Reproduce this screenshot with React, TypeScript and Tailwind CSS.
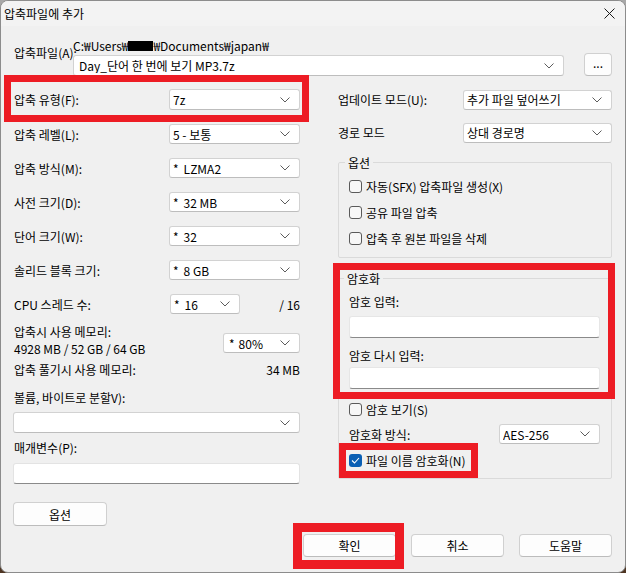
import React from "react";

function Chevron() {
  return (
    <svg width="10" height="6" viewBox="0 0 10 6" className="shrink-0">
      <polyline points="0.5,0.5 5,5 9.5,0.5" fill="none" stroke="#5c5c5c" strokeWidth="1" />
    </svg>
  );
}

function Combo({ children, className }: { children?: React.ReactNode; className: string }) {
  return (
    <div className={"flex items-center bg-white border border-[#d2d2d2] border-b-[#bdbdbd] rounded-[3px] pl-[3px] pr-[9px] " + className}>
      <span className="flex-1 whitespace-nowrap overflow-hidden">{children}</span>
      <Chevron />
    </div>
  );
}

function Star({ children }: { children: React.ReactNode }) {
  return (
    <>
      <span className="mr-[5px]">*</span>
      {children}
    </>
  );
}

function Check({ checked, label }: { checked?: boolean; label: string }) {
  return (
    <div className="flex items-center h-[26px]">
      {checked ? (
        <span className="w-[13px] h-[13px] rounded-[3px] bg-[#0a5fb4] flex items-center justify-center shrink-0">
          <svg width="9" height="7" viewBox="0 0 9 7">
            <polyline points="1,3.5 3.5,6 8,1" fill="none" stroke="#ffffff" strokeWidth="1.1" />
          </svg>
        </span>
      ) : (
        <span className="w-[13px] h-[13px] rounded-[3px] border border-[#5a5a5a] bg-[#f7f7f7] shrink-0" />
      )}
      <span className="ml-[4px] whitespace-nowrap">{label}</span>
    </div>
  );
}

function Row({ label, children, tall }: { label: string; children: React.ReactNode; tall?: boolean }) {
  return (
    <div className={"flex items-center justify-between " + (tall ? "h-[35px]" : "h-[34px]")}>
      <span className="pl-[1px] whitespace-nowrap">{label}</span>
      {children}
    </div>
  );
}

function Btn({ children, className }: { children: React.ReactNode; className: string }) {
  return (
    <button className={"flex items-center justify-center bg-[#fdfdfd] border border-[#d0d0d0] border-b-[#bcbcbc] rounded-[4px] " + className}>
      {children}
    </button>
  );
}

export default function App() {
  return (
    <div className="w-[626px] h-[573px] bg-linear-to-b from-[#a8a8a8] to-[#4e3522] font-['Noto_Sans_CJK_KR',sans-serif] text-[12px] leading-[15px] text-black">
      <div className="relative w-full h-full flex flex-col rounded-[8px] border border-[#8c8c8c] bg-[#f0f0f0] overflow-hidden">
        {/* title bar */}
        <div className="h-[25px] shrink-0 flex items-center justify-between bg-[#f3f3f3] pl-[3px] pr-[10px]">
          <span>압축파일에 추가</span>
          <svg width="11" height="11" viewBox="0 0 11 11">
            <line x1="0.5" y1="0.5" x2="10.5" y2="10.5" stroke="#1a1a1a" strokeWidth="1" />
            <line x1="10.5" y1="0.5" x2="0.5" y2="10.5" stroke="#1a1a1a" strokeWidth="1" />
          </svg>
        </div>

        {/* body */}
        <div className="flex-1 flex flex-col pl-[12px] pr-[13px]">
          {/* header */}
          <div className="flex pt-[12px]">
            <span className="w-[60px] shrink-0 pt-[7px] pl-[1px] whitespace-nowrap">압축파일(A):</span>
            <div className="flex-1 flex flex-col">
              <div className="h-[15px] flex items-center whitespace-nowrap">
                C:₩Users₩<span className="inline-block w-[25px] h-[10px] bg-black" />₩Documents₩japan₩
              </div>
              <div className="flex items-end h-[23px]">
                <Combo className="w-[491px] h-[21px]">
                  <span className="pl-[2px]">Day_단어 한 번에 보기 MP3.7z</span>
                </Combo>
                <Btn className="ml-auto w-[28px] h-[23px] pb-[4px]">...</Btn>
              </div>
            </div>
          </div>

          {/* columns */}
          <div className="flex mt-[6px] gap-[38px]">
            {/* left */}
            <div className="w-[287px] flex flex-col">
              <Row label="압축 유형(F):" tall>
                <Combo className="w-[131px] h-[21px]">7z</Combo>
              </Row>
              <Row label="압축 레벨(L):">
                <Combo className="w-[131px] h-[20px]">5 - 보통</Combo>
              </Row>
              <Row label="압축 방식(M):">
                <Combo className="w-[131px] h-[20px]"><Star>LZMA2</Star></Combo>
              </Row>
              <Row label="사전 크기(D):">
                <Combo className="w-[131px] h-[20px]"><Star>32 MB</Star></Combo>
              </Row>
              <Row label="단어 크기(W):">
                <Combo className="w-[131px] h-[20px]"><Star>32</Star></Combo>
              </Row>
              <Row label="솔리드 블록 크기:">
                <Combo className="w-[131px] h-[20px]"><Star>8 GB</Star></Combo>
              </Row>
              <div className="flex items-center h-[34px]">
                <span className="pl-[1px] w-[157px] whitespace-nowrap">CPU 스레드 수:</span>
                <Combo className="w-[70px] h-[20px]"><Star>16</Star></Combo>
                <span className="ml-auto whitespace-nowrap">/ 16</span>
              </div>
              <div className="flex justify-between mt-[2px] h-[34px]">
                <div className="flex flex-col pl-[1px]">
                  <span className="h-[17px] flex items-center whitespace-nowrap">압축시 사용 메모리:</span>
                  <span className="h-[17px] flex items-center whitespace-nowrap">4928 MB / 52 GB / 64 GB</span>
                </div>
                <Combo className="w-[77px] h-[20px] mt-[10px]">
                  <span className="pl-[2px]"><span className="mr-[4px]">*</span>80%</span>
                </Combo>
              </div>
              <div className="flex justify-between items-center h-[17px] mt-[4px]">
                <span className="pl-[1px] whitespace-nowrap">압축 풀기시 사용 메모리:</span>
                <span>34 MB</span>
              </div>
              <div className="h-[17px] flex items-center mt-[11px] pl-[1px] whitespace-nowrap">볼륨, 바이트로 분할V):</div>
              <Combo className="w-full h-[21px] mt-[6px]">{""}</Combo>
              <div className="h-[17px] flex items-center mt-[6px] pl-[1px]">매개변수(P):</div>
              <div className="w-full h-[21px] mt-[7px] bg-white border border-[#e3e3e3] border-b-[#8a8a8a] rounded-[3px]" />
              <Btn className="w-[94px] h-[24px] mt-[18px]">옵션</Btn>
            </div>

            {/* right */}
            <div className="flex-1 flex flex-col">
              <div className="flex items-center justify-between h-[35px]">
                <span className="whitespace-nowrap">업데이트 모드(U):</span>
                <Combo className="w-[149px] h-[20px]">추가 파일 덮어쓰기</Combo>
              </div>
              <div className="flex items-center justify-between h-[31px]">
                <span className="whitespace-nowrap">경로 모드</span>
                <Combo className="w-[149px] h-[20px]">상대 경로명</Combo>
              </div>
              <fieldset className="mt-[7px] border border-[#dadada] rounded-[2px] pl-[10px] pr-[11px] pt-[3px] pb-[6px]">
                <legend className="ml-[-4px] px-[3px] leading-[15px]">옵션</legend>
                <Check label="자동(SFX) 압축파일 생성(X)" />
                <Check label="공유 파일 압축" />
                <Check label="압축 후 원본 파일을 삭제" />
              </fieldset>
              <fieldset className="mt-[13px] border border-[#dadada] rounded-[2px] pl-[10px] pr-[11px] pt-[8px] pb-[5px]">
                <legend className="ml-[-5px] px-[3px] leading-[15px]">암호화</legend>
                <div className="h-[15px] flex items-center whitespace-nowrap">암호 입력:</div>
                <div className="w-full h-[22px] mt-[7px] bg-white border border-[#e6e6e6] border-b-[#8a8a8a] rounded-[3px]" />
                <div className="h-[15px] flex items-center mt-[10px] whitespace-nowrap">암호 다시 입력:</div>
                <div className="w-full h-[22px] mt-[4px] bg-white border border-[#e6e6e6] border-b-[#8a8a8a] rounded-[3px]" />
                <div className="mt-[7px]">
                  <Check label="암호 보기(S)" />
                </div>
                <div className="flex items-center justify-between h-[22px] mt-[1px]">
                  <span className="whitespace-nowrap">암호화 방식:</span>
                  <Combo className="w-[101px] h-[20px]">AES-256</Combo>
                </div>
                <div className="mt-[2px]">
                  <Check checked label="파일 이름 암호화(N)" />
                </div>
              </fieldset>
            </div>
          </div>

          {/* bottom buttons */}
          <div className="flex justify-end gap-[15px] mt-[8px]">
            <Btn className="w-[93px] h-[23px] border-[#3d86cc] border-b-[#1a6fc0]">확인</Btn>
            <Btn className="w-[93px] h-[23px]">취소</Btn>
            <Btn className="w-[93px] h-[23px]">도움말</Btn>
          </div>
        </div>

        {/* red annotation boxes */}
        <div className="absolute left-[3px] top-[74px] w-[305px] h-[47px] border-[7px] border-[#ed1c24] pointer-events-none" />
        <div className="absolute left-[332px] top-[262px] w-[282px] h-[136px] border-[7px] border-[#ed1c24] pointer-events-none" />
        <div className="absolute left-[338px] top-[442px] w-[139px] h-[35px] border-[7px] border-[#ed1c24] pointer-events-none" />
        <div className="absolute left-[292px] top-[522px] w-[111px] h-[46px] border-[9px] border-[#ed1c24] pointer-events-none" />
      </div>
    </div>
  );
}
